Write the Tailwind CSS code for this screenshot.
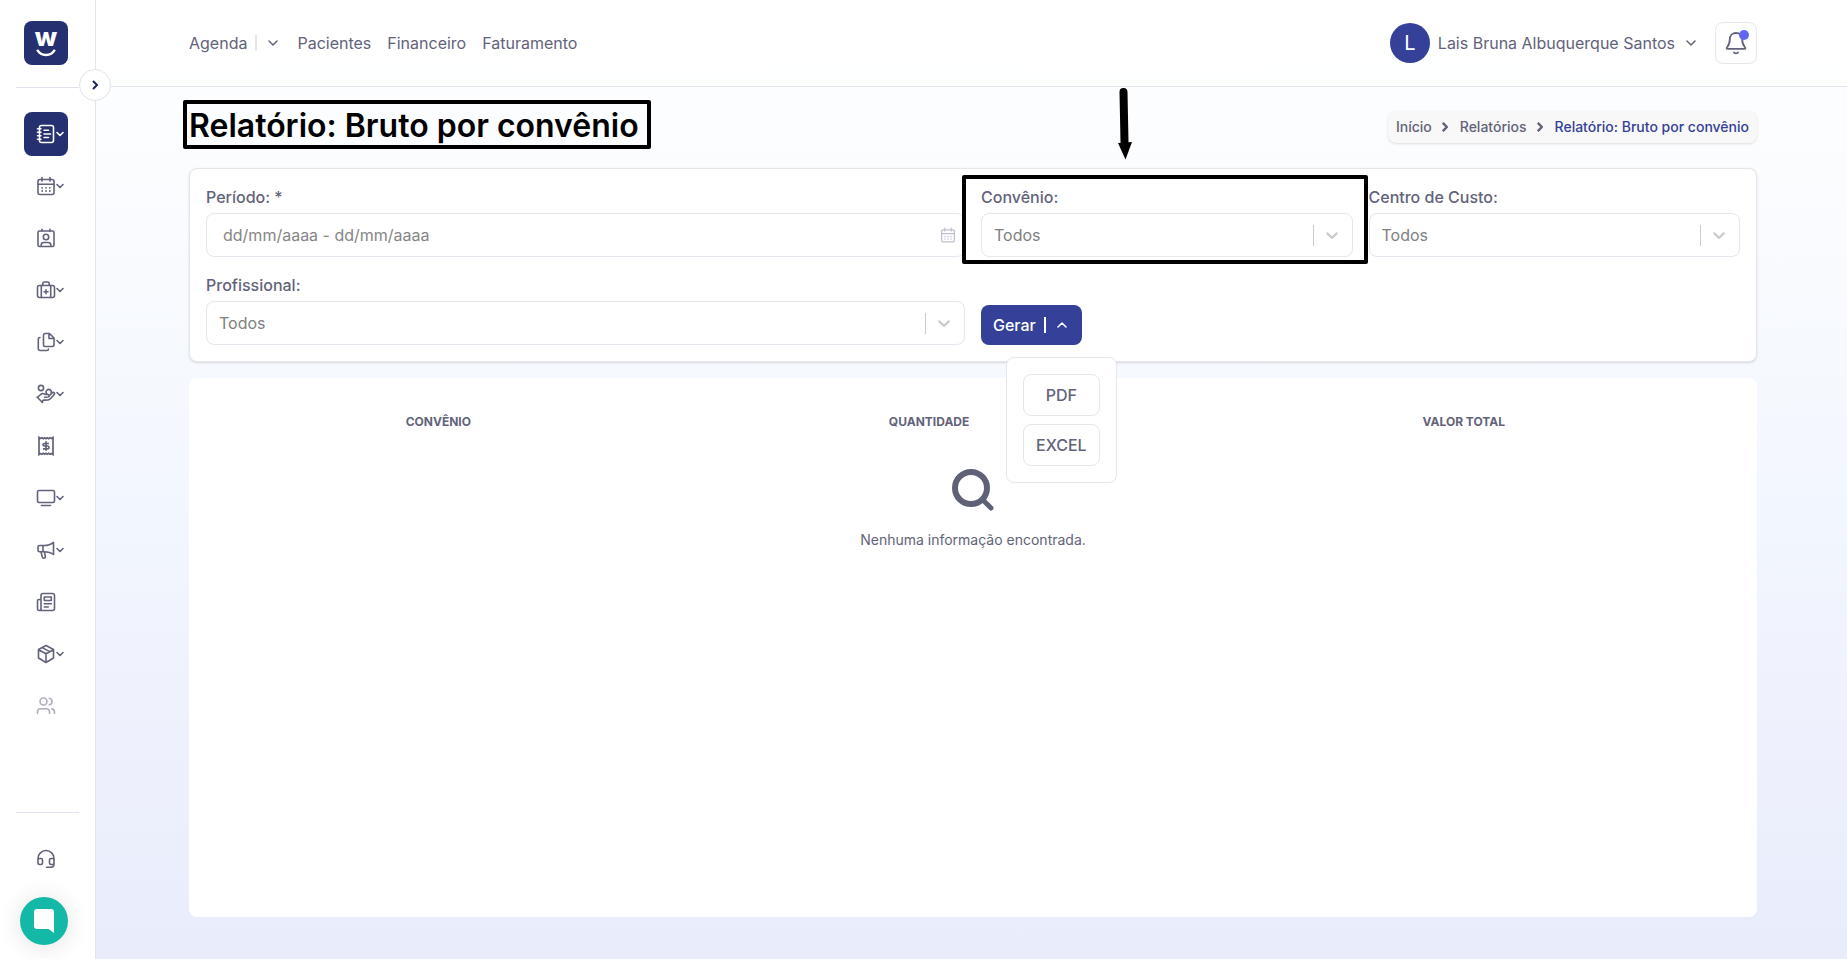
<!DOCTYPE html>
<html lang="pt-BR">
<head>
  <meta charset="UTF-8">
  <meta name="viewport" content="width=device-width, initial-scale=1.0">
  <title>Relatório: Bruto por convênio</title>
  <script src="https://cdn.jsdelivr.net/npm/@tailwindcss/browser@4"></script>
</head>
<body class="font-['Inter','Liberation_Sans',sans-serif] text-base text-[#62637a] bg-white">

<!-- Shared icons -->
<svg class="hidden" aria-hidden="true">
  <symbol id="chevron" viewBox="0 0 10 6"><path d="M1 1l4 4 4-4" fill="none" stroke="currentColor" stroke-width="1.5" stroke-linecap="round" stroke-linejoin="round"/></symbol>
  <symbol id="menu-chevron" viewBox="0 0 8 6"><path d="M1 1.500l3 3 3-3" fill="none" stroke="currentColor" stroke-width="1.600" stroke-linecap="round" stroke-linejoin="round"/></symbol>
  <symbol id="select-chevron" viewBox="0 0 20 20"><path fill="currentColor" d="M4.516 7.548c0.436-0.446 1.043-0.481 1.576 0l3.908 3.747 3.908-3.747c0.533-0.481 1.141-0.446 1.574 0 0.436 0.445 0.408 1.197 0 1.615-0.406 0.418-4.695 4.502-4.695 4.502-0.217 0.223-0.502 0.335-0.787 0.335s-0.57-0.112-0.789-0.335c0 0-4.287-4.084-4.695-4.502s-0.436-1.17 0-1.615z"/></symbol>
  <symbol id="calendar" viewBox="0 0 20 20">
    <g fill="none" stroke="currentColor" stroke-width="1.6" stroke-linecap="round"><rect x="2" y="3.5" width="16" height="15" rx="2"/><path d="M2 8.2h16M6 1.5v3.6M14 1.5v3.6"/></g>
    <g fill="currentColor"><circle cx="6.2" cy="11.8" r=".9"/><circle cx="10" cy="11.8" r=".9"/><circle cx="13.8" cy="11.8" r=".9"/><circle cx="6.2" cy="15" r=".9"/><circle cx="10" cy="15" r=".9"/><circle cx="13.8" cy="15" r=".9"/></g>
  </symbol>
</svg>

<div class="flex min-h-screen">

  <!-- SIDEBAR -->
  <aside class="relative flex w-24 shrink-0 flex-col border-r border-[#e5e6ec] bg-white">
    <a href="#" aria-label="Início" class="mt-[21px] ml-6 flex size-11 flex-col items-center justify-center rounded-lg bg-[#253070] text-white">
      <span class="font-['Inter',sans-serif] text-[26px] leading-4 font-extrabold">w</span>
      <svg class="mt-1 h-2 w-5" viewBox="0 0 20 8" fill="none" stroke="currentColor" stroke-width="2.4"><path d="M1.200 .8C5 7.800 15 7.800 18.800 .8"/></svg>
    </a>
    <hr class="mx-4 mt-[22px] border-[#e3e3ee]">
    <button type="button" aria-label="Expandir menu" class="absolute top-[69px] -right-4 z-10 flex size-8 items-center justify-center rounded-full border border-[#e3e3ee] bg-white text-[#1d2660]">
      <svg class="h-2.5 w-1.5" viewBox="0 0 6 10" fill="none" stroke="currentColor" stroke-width="2"><path d="M1 1l4 4-4 4"/></svg>
    </button>

    <nav aria-label="Menu lateral" class="mt-6 ml-6 flex flex-col gap-2">
      <a href="#" aria-label="Relatórios" class="flex size-11 items-center rounded-lg bg-[#253070] pl-3 text-white">
        <svg class="size-5 shrink-0" viewBox="0 0 20 20" fill="none" stroke="currentColor" stroke-width="1.6" stroke-linecap="round"><rect x="3.500" y="1.500" width="14" height="17" rx="2"/><path d="M1.500 4.800h3.500M1.500 8.200h3.500M1.500 11.700h3.500M1.500 15.200h3.500M8 6.300h4.500M8 10h6.500M8 13.500h4.500"/></svg>
        <svg class="h-[6px] w-2 shrink-0"><use href="#menu-chevron"/></svg>
      </a>
      <a href="#" aria-label="Agenda" class="flex size-11 items-center pl-3">
        <svg class="size-5 shrink-0"><use href="#calendar"/></svg>
        <svg class="h-[6px] w-2 shrink-0"><use href="#menu-chevron"/></svg>
      </a>
      <a href="#" aria-label="Pacientes" class="flex size-11 items-center pl-3">
        <svg class="size-5" viewBox="0 0 20 20" fill="none" stroke="currentColor" stroke-width="1.6" stroke-linecap="round"><rect x="2" y="3" width="16" height="15.500" rx="1.500"/><path d="M6 1.200v1.800M14 1.200v1.800M5.200 18.200v-1.200c0-1.500 1-2.500 2.500-2.500h4.600c1.500 0 2.500 1 2.500 2.500v1.200"/><circle cx="10" cy="9" r="2.700"/></svg>
      </a>
      <a href="#" aria-label="Clínica" class="flex size-11 items-center pl-3">
        <svg class="size-5 shrink-0" viewBox="0 0 20 20" fill="none" stroke="currentColor" stroke-width="1.600" stroke-linecap="round"><rect x="1.500" y="5.500" width="17" height="12" rx="2"/><path d="M5.300 5.500v12M14.700 5.500v12M6.800 5.300V3.500c0-1 .5-1.500 1.500-1.500h3.400c1 0 1.500.5 1.500 1.500v1.800M10 9.700v4M8 11.700h4"/></svg>
        <svg class="h-[6px] w-2 shrink-0"><use href="#menu-chevron"/></svg>
      </a>
      <a href="#" aria-label="Documentos" class="flex size-11 items-center pl-3">
        <svg class="size-5 shrink-0" viewBox="0 0 20 20" fill="none" stroke="currentColor" stroke-width="1.600" stroke-linecap="round" stroke-linejoin="round"><path d="M9 1.500h4.500L18 6v7c0 1-.5 1.500-1.500 1.500H9c-1 0-1.500-.5-1.500-1.500V3c0-1 .5-1.500 1.500-1.500zM13 1.800V6.500h4.700M4 5.500c-1.200 0-1.700.6-1.700 1.500v9.500c0 1.200.8 2 2 2H11c1 0 1.500-.5 1.500-1.500"/></svg>
        <svg class="h-[6px] w-2 shrink-0"><use href="#menu-chevron"/></svg>
      </a>
      <a href="#" aria-label="Financeiro" class="flex size-11 items-center pl-3">
        <svg class="size-5 shrink-0" viewBox="0 0 20 20" fill="none" stroke="currentColor" stroke-width="1.600" stroke-linecap="round" stroke-linejoin="round"><circle cx="5" cy="4" r="2.600"/><path d="M10.800 9.800a2.600 2.600 0 1 1 4.200-.4M1.500 13.500l3.300-3.200c1.300-1 2.700-1 4.200-.1 1 .5 2 .4 3 .3 1.600-.1 1.800 2.200.2 2.500l-3.700.3M12.800 12.300l3.600-3.600c1.200-1 2.800.3 1.900 1.600l-3.600 4.300c-.7.800-1.500 1.200-2.500 1.300l-4.700.2-1.800 1.900M1 13l5.500 5.500"/></svg>
        <svg class="h-[6px] w-2 shrink-0"><use href="#menu-chevron"/></svg>
      </a>
      <a href="#" aria-label="Faturamento" class="flex size-11 items-center pl-3">
        <svg class="size-5" viewBox="0 0 20 20" fill="none" stroke="currentColor" stroke-width="1.700"><path d="M3 1.500l1.200 1L6 1.800l1.300.9 1.400-.9 1.300.9 1.300-.9 1.400.9 1.300-.9 1.800.7 1.200-1v17l-1.200-1-1.800.7-1.300-.9-1.400.9-1.300-.9-1.300.9-1.400-.9-1.300.9-1.800-.7-1.200 1zM13 7.500H8.500c-2 0-2 2.500 0 2.500h3c2 0 2 2.800 0 2.800H7M10 5.300v9.500"/></svg>
      </a>
      <a href="#" aria-label="Telas" class="flex size-11 items-center pl-3">
        <svg class="size-5 shrink-0" viewBox="0 0 20 20" fill="none" stroke="currentColor" stroke-width="1.600" stroke-linecap="round"><rect x="1.500" y="2.500" width="17" height="12" rx="1.500"/><path d="M5.500 17.500h9"/></svg>
        <svg class="h-[6px] w-2 shrink-0"><use href="#menu-chevron"/></svg>
      </a>
      <a href="#" aria-label="Marketing" class="flex size-11 items-center pl-3">
        <svg class="size-5 shrink-0" viewBox="0 0 20 20" fill="none" stroke="currentColor" stroke-width="1.600" stroke-linecap="round" stroke-linejoin="round"><path d="M3.500 5.500H8c4 0 7.500-1.500 9.500-3.200v12.200C15.500 12.800 12 11.700 8 11.700H3.500c-1 0-1.500-.5-1.500-1.500V7c0-1 .5-1.500 1.500-1.500zM7 5.500v6M5 12l1.300 5c.5 1.700 3.300 1.500 3-.5L8.500 12"/></svg>
        <svg class="h-[6px] w-2 shrink-0"><use href="#menu-chevron"/></svg>
      </a>
      <a href="#" aria-label="Notícias" class="flex size-11 items-center pl-3">
        <svg class="size-5" viewBox="0 0 20 20" fill="none" stroke="currentColor" stroke-width="1.600" stroke-linecap="round" stroke-linejoin="round"><path d="M5 16.500V3.500c0-1.300.7-2 2-2h9.500c1.300 0 2 .7 2 2v13c0 1.300-.7 2-2 2h-13c-1.300 0-2-.7-2-2V9c0-1 .5-1.500 1.500-1.500h2M5 16.500c0 1.200-.5 2-1.500 2M8.300 5h7v3.500h-7zM8.300 11.800h7M8.300 15h4"/></svg>
      </a>
      <a href="#" aria-label="Estoque" class="flex size-11 items-center pl-3">
        <svg class="size-5 shrink-0" viewBox="0 0 20 20" fill="none" stroke="currentColor" stroke-width="1.600" stroke-linecap="round" stroke-linejoin="round"><path d="M10 1.500l7.500 4v8.500L10 18.500 2.500 14V5.500zM2.500 5.700L10 9.800l7.500-4.100M10 9.800v8.500M6.200 3.600l7.500 4"/></svg>
        <svg class="h-[6px] w-2 shrink-0"><use href="#menu-chevron"/></svg>
      </a>
      <a href="#" aria-label="Usuários" class="flex size-11 items-center pl-3 opacity-50">
        <svg class="size-5" viewBox="0 0 20 20" fill="none" stroke="currentColor" stroke-width="1.600" stroke-linecap="round" stroke-linejoin="round"><circle cx="7.500" cy="5.500" r="3.500"/><path d="M1.500 17.500V16c0-2 1.200-3.200 3.200-3.200h5.600c2 0 3.200 1.200 3.200 3.200v1.500M13.300 2.200c3.700.8 3.700 5.800 0 6.600M15.800 12.900c1.700.4 2.700 1.500 2.700 3.100v1.500"/></svg>
      </a>
    </nav>

    <div class="mt-auto">
      <hr class="mx-4 border-[#e3e3ee]">
      <a href="#" aria-label="Suporte" class="mt-6 ml-6 flex size-11 items-center pl-3">
        <svg class="size-5" viewBox="0 0 20 20" fill="none" stroke="currentColor" stroke-width="1.600" stroke-linecap="round" stroke-linejoin="round"><path d="M2 12V9.500a8 8 0 0 1 16 0V15c0 2-1 3.300-3 3.300h-4.500M3.500 9.500H5c1 0 1.500.5 1.500 1.500v3c0 1-.5 1.500-1.500 1.500H3.500c-1 0-1.500-.5-1.500-1.500v-3c0-1 .5-1.500 1.500-1.500zM15 9.500h1.500c1 0 1.500.5 1.500 1.500v3c0 1-.5 1.500-1.500 1.500H15c-1 0-1.500-.5-1.500-1.500v-3c0-1 .5-1.500 1.500-1.500z"/></svg>
      </a>
      <button type="button" aria-label="Abrir chat" class="mt-4 mb-3.5 ml-5 flex size-12 items-center justify-center rounded-full bg-[#14b8a6] text-white shadow-[0_2px_24px_rgba(0,0,0,0.12)]">
        <svg class="h-6 w-5" viewBox="0 0 20 24"><path fill="currentColor" d="M3 0h14a3 3 0 0 1 3 3v21l-5.500-4H3a3 3 0 0 1-3-3V3a3 3 0 0 1 3-3z"/></svg>
      </button>
    </div>
  </aside>

  <div class="flex min-w-0 flex-1 flex-col bg-linear-to-b from-white via-[#f3f7fe] to-[#e9ecfb]">

    <!-- TOP BAR -->
    <header class="flex h-[87px] items-center justify-between border-b border-[#e5e6ec] bg-white/60 pr-[90px] pb-px pl-[93px]">
      <nav aria-label="Principal" class="flex items-center gap-4">
        <div class="flex items-center">
          <a href="#">Agenda</a>
          <span class="ml-2 h-4 w-0.5 bg-[#e5e6ec]"></span>
          <button type="button" aria-label="Abrir opções da agenda" class="ml-2 px-[3px]"><svg class="h-1.5 w-2.5"><use href="#chevron"/></svg></button>
        </div>
        <a href="#">Pacientes</a>
        <a href="#">Financeiro</a>
        <a href="#">Faturamento</a>
      </nav>
      <div class="flex items-center">
        <button type="button" class="flex items-center">
          <span class="flex size-10 items-center justify-center rounded-full bg-[#354099] text-xl text-white">L</span>
          <span class="ml-2">Lais Bruna Albuquerque Santos</span>
          <svg class="mr-px ml-[11px] h-1.5 w-2.5"><use href="#chevron"/></svg>
        </button>
        <button type="button" aria-label="Notificações" class="relative ml-[18px] flex size-[42px] items-center justify-center rounded-lg border border-[#e5e7eb] bg-white">
          <svg class="size-6" viewBox="0 0 24 24" fill="none" stroke="currentColor" stroke-width="1.800" stroke-linecap="round" stroke-linejoin="round"><path d="M12 2c-3.600 0-6.200 2.700-6.200 6.300 0 3.700-.8 5.900-2.900 8.200-.5.600-.3 1.300.6 1.300h17c.9 0 1.100-.7.6-1.300-2.100-2.300-2.900-4.500-2.900-8.200C18.200 4.700 15.600 2 12 2zM10 21.500c1 1.200 3 1.200 4 0"/></svg>
          <span class="absolute top-[7px] right-[7px] size-2.5 rounded-full bg-[#6366f1]"></span>
        </button>
      </div>
    </header>

    <main class="flex flex-1 flex-col pr-[90px] pb-[42px] pl-[93px]">

      <div class="flex h-[81px] items-center justify-between pb-0.5">
        <h1 class="relative pb-0.5 text-[32px] leading-10 font-semibold text-black">
          Relatório: Bruto por convênio
          <span class="absolute -top-1.5 -right-3 -bottom-px -left-1.5 rounded-xs border-4 border-black"></span>
        </h1>
        <nav aria-label="Trilha" class="flex h-8 items-center rounded-lg bg-[#f8f8f8] px-2 text-sm font-medium shadow-sm">
          <a href="#">Início</a>
          <svg class="mr-3 ml-2.5 h-2.5 w-1.5" viewBox="0 0 6 10" fill="none" stroke="currentColor" stroke-width="2.4"><path d="M.8 .8L4.800 5l-4 4.200"/></svg>
          <a href="#">Relatórios</a>
          <svg class="mr-3 ml-2.5 h-2.5 w-1.5" viewBox="0 0 6 10" fill="none" stroke="currentColor" stroke-width="2.4"><path d="M.8 .8L4.800 5l-4 4.200"/></svg>
          <a href="#" aria-current="page" class="text-[#354099]">Relatório: Bruto por convênio</a>
        </nav>
      </div>

      <!-- FILTERS -->
      <form class="grid grid-cols-4 gap-4 rounded-lg border border-[#e5e6ec] bg-white p-4 shadow-sm">
        <div class="col-span-2 flex flex-col gap-1">
          <label for="periodo" class="font-medium">Período: *</label>
          <div class="relative">
            <input id="periodo" type="text" placeholder="dd/mm/aaaa - dd/mm/aaaa" class="h-11 w-full rounded-lg border border-[#e6e6ee] bg-white px-4 placeholder:text-[#868686]">
            <svg class="pointer-events-none absolute top-3.5 right-[9px] size-4 text-[#bfc0cf]"><use href="#calendar"/></svg>
          </div>
        </div>

        <div class="relative flex flex-col gap-1">
          <label for="convenio" class="font-medium">Convênio:</label>
          <div class="relative">
            <select id="convenio" class="h-11 w-full appearance-none rounded-lg border border-[#e6e6ee] bg-white pr-11 pl-3 text-[#808080]"><option>Todos</option></select>
            <span class="pointer-events-none absolute inset-y-0 right-[11px] flex items-center gap-2 text-[#cccccc]"><span class="h-[21px] w-px bg-[#cccccc]"></span><svg class="size-5"><use href="#select-chevron"/></svg></span>
          </div>
          <span class="pointer-events-none absolute -top-2.5 -right-[15px] -bottom-[7px] -left-[19px] rounded-xs border-4 border-black"></span>
          <svg class="pointer-events-none absolute -top-[97px] left-[137px] h-[72px] w-3.5" viewBox="0 0 14 72"><path d="M5.500 4L6.500 54" stroke="#000" stroke-width="8" stroke-linecap="round"/><path d="M0 55l14-1L7.500 71.500z"/></svg>
        </div>

        <div class="flex flex-col gap-1">
          <label for="centro" class="font-medium">Centro de Custo:</label>
          <div class="relative">
            <select id="centro" class="h-11 w-full appearance-none rounded-lg border border-[#e6e6ee] bg-white pr-11 pl-3 text-[#808080]"><option>Todos</option></select>
            <span class="pointer-events-none absolute inset-y-0 right-[11px] flex items-center gap-2 text-[#cccccc]"><span class="h-[21px] w-px bg-[#cccccc]"></span><svg class="size-5"><use href="#select-chevron"/></svg></span>
          </div>
        </div>

        <div class="col-span-2 flex flex-col gap-1">
          <label for="profissional" class="font-medium">Profissional:</label>
          <div class="relative">
            <select id="profissional" class="h-11 w-full appearance-none rounded-lg border border-[#e6e6ee] bg-white pr-11 pl-3 text-[#808080]"><option>Todos</option></select>
            <span class="pointer-events-none absolute inset-y-0 right-[11px] flex items-center gap-2 text-[#cccccc]"><span class="h-[21px] w-px bg-[#cccccc]"></span><svg class="size-5"><use href="#select-chevron"/></svg></span>
          </div>
        </div>

        <div class="relative flex items-end">
          <button type="button" aria-expanded="true" class="flex h-10 items-center rounded-lg bg-[#354099] pr-[15px] pl-3 font-medium text-white">
            Gerar
            <span class="ml-2 h-4 w-0.5 bg-white"></span>
            <svg class="ml-[11px] h-1.5 w-2.5 rotate-180"><use href="#chevron"/></svg>
          </button>
          <div class="absolute top-full left-[25px] z-10 mt-3 flex flex-col gap-2 rounded-lg border border-[#e5e7eb] bg-white p-4">
            <button type="button" class="h-[42px] rounded-lg border border-[#e5e7eb] px-3 font-medium">PDF</button>
            <button type="button" class="h-[42px] rounded-lg border border-[#e5e7eb] px-3 font-medium">EXCEL</button>
          </div>
        </div>
      </form>

      <!-- RESULTS -->
      <section class="mt-4 flex-1 rounded-lg bg-white pt-8">
        <table class="w-full table-fixed text-center">
          <colgroup><col class="w-[31.8%]"><col class="w-[30.8%]"><col></colgroup>
          <thead>
            <tr class="h-6 text-xs font-bold">
              <th scope="col">CONVÊNIO</th>
              <th scope="col">QUANTIDADE</th>
              <th scope="col">VALOR TOTAL</th>
            </tr>
          </thead>
          <tbody>
            <tr>
              <td colspan="3" class="pt-[35px]">
                <svg class="mx-auto size-[42px]" viewBox="0 0 42 42" fill="none" stroke="#5f6277" stroke-width="6" stroke-linecap="round"><circle cx="19" cy="19" r="16"/><path d="M31 31l8 8" stroke-width="5"/></svg>
                <p class="mt-[19px] text-sm">Nenhuma informação encontrada.</p>
              </td>
            </tr>
          </tbody>
        </table>
      </section>
    </main>
  </div>
</div>

</body>
</html>
